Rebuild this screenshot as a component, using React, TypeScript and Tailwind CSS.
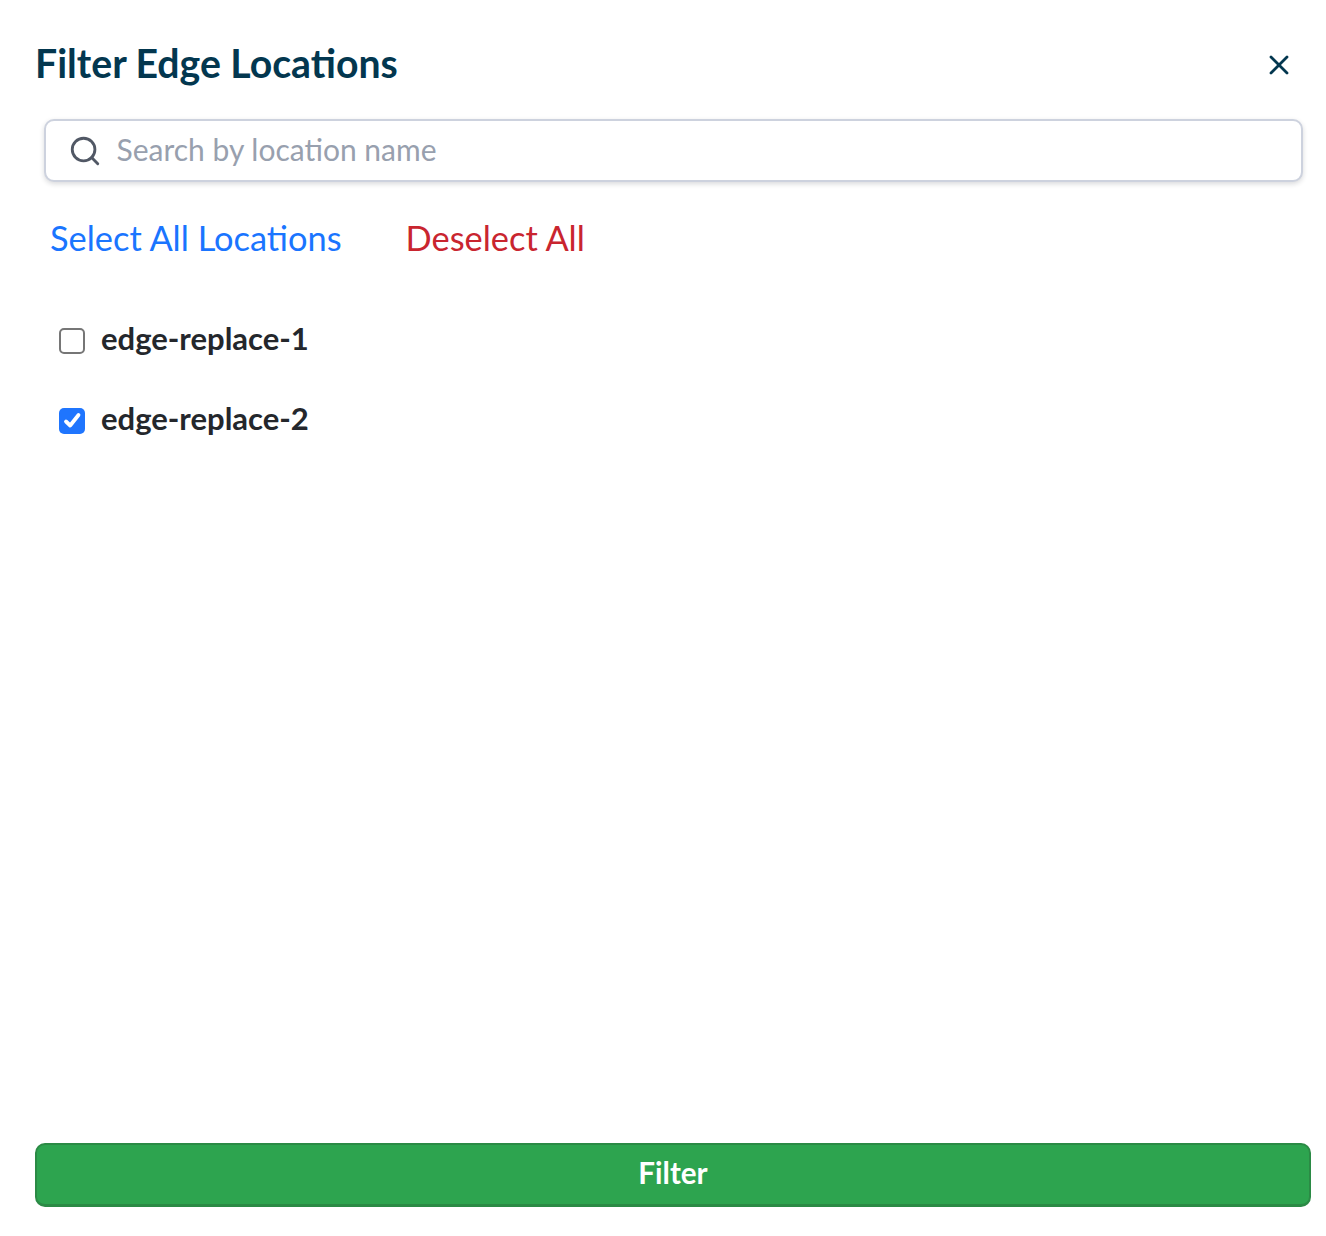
import { Search, X } from "lucide-react";

const locations = [
  { name: "edge-replace-1", checked: false },
  { name: "edge-replace-2", checked: true },
];

export default function App() {
  return (
    <div className="flex h-[1236px] flex-col bg-white pt-[40px] pr-[15px] pb-[29px] pl-[35px] font-['Lato',sans-serif]">
      <div className="flex h-[48px] items-center justify-between pr-[16px]">
        <h2 className="pb-[2px] text-[39.2px] leading-[48px] font-bold text-[#03374f]">Filter Edge Locations</h2>
        <button className="mt-[2px] text-[#03374f]">
          <X className="h-[32px] w-[32px]" strokeWidth={2.1} />
        </button>
      </div>

      <div className="mt-[31px] mr-[8.5px] ml-[8.5px] flex h-[63px] items-center rounded-[10px] border-2 border-[#cdd2de] bg-white pl-[22px] shadow-[0_2px_5px_rgba(16,24,40,0.16)]">
        <Search className="h-[34px] w-[34px] text-[#515865]" strokeWidth={2} />
        <span className="ml-[15px] pb-[3px] text-[30px] text-[#98a0ae]">Search by location name</span>
      </div>

      <div className="mt-[36px] ml-[15px] flex gap-[64px] text-[34.4px] leading-[40px]">
        <a className="text-[#1a75ff]">Select All Locations</a>
        <a className="text-[#c9252f]">Deselect All</a>
      </div>

      <div className="mt-[68px] ml-[24px] flex flex-col gap-[50px]">
        {locations.map((loc) => (
          <label key={loc.name} className="flex h-[30px] items-center gap-[16px]">
            {loc.checked ? (
              <span className="flex h-[26px] w-[26px] items-center justify-center rounded-[5px] bg-[#1f75fe]">
                <svg viewBox="0 0 26 26" className="h-[26px] w-[26px]">
                  <path d="M7 13.5 L11.2 17.5 L19.5 7" fill="none" stroke="white" strokeWidth="3.8" strokeLinecap="round" strokeLinejoin="round" />
                </svg>
              </span>
            ) : (
              <span className="h-[26px] w-[26px] rounded-[5px] border-2 border-[#767676] bg-white" />
            )}
            <span className="pb-[5px] text-[31px] font-bold text-[#24272c]">{loc.name}</span>
          </label>
        ))}
      </div>

      <button className="mt-auto h-[64px] w-full rounded-[10px] border-2 border-b-[3px] border-[#2b8a45] bg-[#2da44f] pb-[2px] text-[29.6px] font-bold text-white">
        Filter
      </button>
    </div>
  );
}
